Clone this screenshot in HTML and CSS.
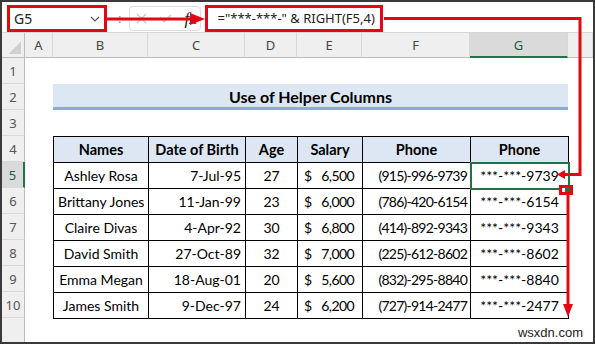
FILE: index.html
```html
<!DOCTYPE html>
<html>
  <head>
    <meta charset="utf-8">
    <title>Use of Helper Columns</title>
    <link rel="stylesheet" href="styles.css">
  </head>
<body>
<div class="app">
  <!-- formula bar -->
  <div class="fbar">
    <div class="namebox">
      <span>G5</span>
      <svg width="10" height="6" viewBox="0 0 10 6"><polyline points="1,1 5,5 9,1" fill="none" stroke="#555" stroke-width="1.2"/></svg>
    </div>
    <span class="colon">:</span>
    <div class="tools">
      <svg width="11" height="11" viewBox="0 0 11 11"><path d="M1 1L10 10M10 1L1 10" stroke="#c9c9c9" stroke-width="1.3"/></svg>
      <svg width="13" height="9" viewBox="0 0 13 9"><polyline points="1,3 5,8 12,1" fill="none" stroke="#c9c9c9" stroke-width="1.3"/></svg>
      <span class="fx">fx</span>
    </div>
    <div class="formula">="***-***-" &amp; RIGHT(F5,4)</div>
  </div>

  <!-- sheet -->
  <div class="sheet">
    <div class="corner"><i></i></div>
    <div class="ch">A</div>
    <div class="ch">B</div>
    <div class="ch">C</div>
    <div class="ch">D</div>
    <div class="ch">E</div>
    <div class="ch">F</div>
    <div class="ch on">G</div>
    <div class="ch"></div>

    <div class="rh" style="grid-row:2">1</div>
    <div class="rh" style="grid-row:3">2</div>
    <div class="rh" style="grid-row:4">3</div>
    <div class="rh" style="grid-row:5">4</div>
    <div class="rh on" style="grid-row:6">5</div>
    <div class="rh" style="grid-row:7">6</div>
    <div class="rh" style="grid-row:8">7</div>
    <div class="rh" style="grid-row:9">8</div>
    <div class="rh" style="grid-row:10">9</div>
    <div class="rh" style="grid-row:11">10</div>
    <div class="rh" style="grid-row:12"></div>

    <div class="title">Use of Helper Columns</div>

    <table class="data">
      <colgroup>
        <col style="width:95px"><col style="width:97px"><col style="width:52px">
        <col style="width:65px"><col style="width:108px"><col style="width:98px">
      </colgroup>
      <tr><th>Names</th><th>Date of Birth</th><th>Age</th><th>Salary</th><th>Phone</th><th>Phone</th></tr>
      <tr><td class="c">Ashley Rosa</td><td class="dt">7-Jul-95</td><td class="c">27</td><td class="sal"><div class="money"><span>$</span><span>6,500</span></div></td><td class="ph">(915)-996-9739</td><td class="c sel">***-***-9739</td></tr>
      <tr><td class="c">Brittany Jones</td><td class="dt">11-Jan-99</td><td class="c">23</td><td class="sal"><div class="money"><span>$</span><span>6,000</span></div></td><td class="ph">(786)-420-6154</td><td class="c">***-***-6154</td></tr>
      <tr><td class="c">Claire Divas</td><td class="dt">4-Apr-92</td><td class="c">30</td><td class="sal"><div class="money"><span>$</span><span>6,800</span></div></td><td class="ph">(414)-892-9343</td><td class="c">***-***-9343</td></tr>
      <tr><td class="c">David Smith</td><td class="dt">27-Oct-89</td><td class="c">32</td><td class="sal"><div class="money"><span>$</span><span>7,000</span></div></td><td class="ph">(225)-612-8602</td><td class="c">***-***-8602</td></tr>
      <tr><td class="c">Emma Megan</td><td class="dt">18-Aug-01</td><td class="c">20</td><td class="sal"><div class="money"><span>$</span><span>5,600</span></div></td><td class="ph">(832)-295-8840</td><td class="c">***-***-8840</td></tr>
      <tr><td class="c">James Smith</td><td class="dt">9-Dec-97</td><td class="c">24</td><td class="sal"><div class="money"><span>$</span><span>6,200</span></div></td><td class="ph">(727)-914-2477</td><td class="c">***-***-2477</td></tr>
    </table>
  </div>

  <!-- red callouts drawn over the sheet -->
  <svg class="marks" width="595" height="344" viewBox="0 0 595 344">
    <line x1="107" y1="19" x2="192" y2="19" stroke="#e30613" stroke-width="3"/>
    <polygon points="190,13 205,19 190,25" fill="#e30613"/>
    <polyline points="384,18.5 580,18.5 580,174.5 563,174.5" fill="none" stroke="#e30613" stroke-width="3"/>
    <polygon points="557,174.5 565,170 565,179" fill="#e30613"/>
    <rect x="560.5" y="186.5" width="11" height="7" fill="#fff" stroke="#e30613" stroke-width="3"/>
    <rect x="565" y="187" width="5" height="5" fill="#217346"/>
    <line x1="568" y1="195" x2="568" y2="306" stroke="#e30613" stroke-width="3"/>
    <polygon points="563,304 573,304 568,317" fill="#e30613"/>
  </svg>

  <div class="wm">wsxdn.com</div>
</div>
</body>
</html>
```

FILE: styles.css
```css
* {
  box-sizing: border-box;
}
body {
  margin: 0;
  padding: 0;
  font-family: Lato, "Liberation Sans", sans-serif;
}
.app {
  position: relative;
  width: 595px;
  height: 344px;
  border: 2px solid #3a3a3a;
  background: #fff;
  overflow: hidden;
}

/* formula bar */
.fbar {
  display: flex;
  align-items: flex-start;
  height: 31px;
  padding: 3px 0 0 5px;
  border-bottom: 1px solid #d6d6d6;
  font-family: "Noto Sans", "Open Sans", sans-serif;
  font-size: 13px;
  color: #222;
}
.namebox {
  display: flex;
  align-items: center;
  justify-content: space-between;
  width: 100px;
  height: 27px;
  padding: 0 4px 0 4px;
  border: 3px solid #e30613;
  font-size: 14px;
}
.colon {
  margin: 0 8px 0 11px;
  line-height: 27px;
  color: #8a8a8a;
}
.tools {
  display: flex;
  align-items: center;
  gap: 12px;
  width: 72px;
  height: 25px;
  margin-top: 1px;
  padding-left: 6px;
  border: 1px solid #dcdcdc;
  border-radius: 4px;
}
.fx {
  font-family: "Liberation Serif", serif;
  font-style: italic;
  font-size: 17px;
  line-height: 1;
  color: #222;
}
.formula {
  width: 178px;
  height: 27px;
  margin-left: 4px;
  padding-left: 9px;
  border: 3px solid #e30613;
  line-height: 21px;
  white-space: nowrap;
}

/* grid */
.sheet {
  display: grid;
  grid-template-columns: 23px 28px 95px 97px 52px 65px 108px 98px 1fr;
  grid-template-rows: 25px repeat(11, 26px);
  height: 309px;
  overflow: hidden;
}
.corner {
  display: flex;
  align-items: flex-end;
  justify-content: flex-end;
  padding: 0 3px 3px 0;
  background: #efefef;
  border-right: 1px solid #bdbdbd;
  border-bottom: 1px solid #bdbdbd;
}
.corner i {
  display: block;
  width: 13px;
  height: 13px;
  background: linear-gradient(to bottom right, transparent 50%, #d0d0d0 50%);
}
.ch {
  display: flex;
  align-items: center;
  justify-content: center;
  background: #efefef;
  border-right: 1px solid #d8d8d8;
  border-bottom: 1px solid #bdbdbd;
  font-family: "Noto Sans", "Open Sans", sans-serif;
  font-size: 13px;
  color: #444;
}
.ch.on {
  background: #dadada;
  border-bottom: 2px solid #217346;
  color: #1d5e3a;
}
.rh {
  grid-column: 1;
  display: flex;
  align-items: center;
  justify-content: center;
  background: #efefef;
  border-right: 1px solid #bdbdbd;
  border-bottom: 1px solid #d8d8d8;
  font-family: "Noto Sans", "Open Sans", sans-serif;
  font-size: 13px;
  color: #555;
}
.rh.on {
  background: #dadada;
  border-right: 2px solid #217346;
  color: #1d5e3a;
}
.title {
  grid-column: 3 / 9;
  grid-row: 3;
  display: flex;
  align-items: center;
  justify-content: center;
  padding-top: 1px;
  background: #dde7f3;
  border-bottom: 3px solid #8eaadb;
  font-size: 16px;
  font-weight: bold;
  color: #000;
}

/* data table */
.data {
  grid-column: 3 / 9;
  grid-row: 5 / 12;
  align-self: start;
  width: 515px;
  table-layout: fixed;
  border-collapse: collapse;
  font-size: 14px;
  color: #000;
}
.data th, .data td {
  height: 26px;
  padding: 0 4px;
  border: 1px solid #000;
  white-space: nowrap;
}
.data th {
  background: #dde7f3;
  font-size: 14.5px;
  font-weight: bold;
  text-align: center;
}
.data .c {
  text-align: center;
}
.data .dt {
  text-align: right;
  padding-right: 4px;
}
.data .sal {
  padding: 0 8px 0 6px;
}
.money {
  display: flex;
  justify-content: space-between;
  letter-spacing: -0.6px;
}
.data .ph {
  text-align: right;
  padding-right: 3px;
  letter-spacing: -0.75px;
}
.data .sel {
  outline: 2px solid #217346;
  outline-offset: -1px;
}

.marks {
  position: absolute;
  top: -2px;
  left: -2px;
  pointer-events: none;
}
.wm {
  position: absolute;
  right: 10px;
  bottom: 3px;
  font-family: "Liberation Sans", sans-serif;
  font-size: 13px;
  line-height: 1;
  color: #222;
}
```
